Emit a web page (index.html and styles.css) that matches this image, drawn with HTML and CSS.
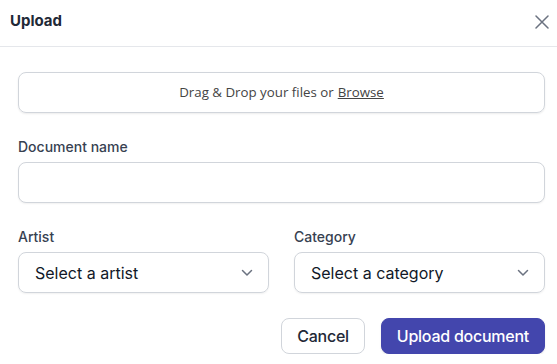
FILE: index.html
```html
<!DOCTYPE html>
<html>
<head>
    <link rel="stylesheet" href="styles.css">
</head>
<body>
    <div class="modal">
        <div class="modal-header">
            <span class="modal-title">Upload</span>
            <button class="close-btn" aria-label="Close">
                <svg width="14" height="14" viewBox="0 0 14 14" fill="none">
                    <path d="M1 1L13 13M13 1L1 13" stroke="#6b7280" stroke-width="1.5" stroke-linecap="round"/>
                </svg>
            </button>
        </div>

        <div class="modal-body">
            <div class="dropzone">
                Drag &amp; Drop your files or <span class="browse">Browse</span>
            </div>

            <div class="field">
                <label class="field-label">Document name</label>
                <input class="text-input" type="text">
            </div>

            <div class="field-row">
                <div class="field">
                    <label class="field-label">Artist</label>
                    <div class="select">
                        <span>Select a artist</span>
                        <svg width="12" height="8" viewBox="0 0 12 8" fill="none">
                            <path d="M1.5 1.5L6 6L10.5 1.5" stroke="#6b7280" stroke-width="1.5" stroke-linecap="round" stroke-linejoin="round"/>
                        </svg>
                    </div>
                </div>
                <div class="field">
                    <label class="field-label">Category</label>
                    <div class="select">
                        <span>Select a category</span>
                        <svg width="12" height="8" viewBox="0 0 12 8" fill="none">
                            <path d="M1.5 1.5L6 6L10.5 1.5" stroke="#6b7280" stroke-width="1.5" stroke-linecap="round" stroke-linejoin="round"/>
                        </svg>
                    </div>
                </div>
            </div>

            <div class="actions">
                <button class="btn btn-cancel">Cancel</button>
                <button class="btn btn-primary">Upload document</button>
            </div>
        </div>
    </div>
</body>
</html>
```

FILE: styles.css
```css
body {
    margin: 0;
    background-color: #ffffff;
    font-family: 'Inter', 'Liberation Sans', sans-serif;
    color: #111827;
}

.modal {
    width: 557px;
}

.modal-header {
    height: 47px;
    border-bottom: 1px solid #e5e7eb;
    box-sizing: border-box;
    display: flex;
    align-items: center;
    justify-content: space-between;
    padding: 0 8px 6px 10px;
}

.modal-title {
    font-size: 15px;
    font-weight: 700;
    color: #1f2937;
}

.close-btn {
    background: none;
    border: none;
    padding: 0;
    display: flex;
    margin-top: 4px;
}

.modal-body {
    padding: 25px 12px 0 18px;
}

.dropzone {
    height: 41px;
    box-sizing: border-box;
    border: 1px solid #d1d5db;
    border-radius: 8px;
    box-shadow: 0 1px 2px rgba(0, 0, 0, 0.08);
    display: flex;
    align-items: center;
    justify-content: center;
    font-family: 'Open Sans', sans-serif;
    font-size: 13.3px;
    color: #444;
    padding-bottom: 1px;
}

.browse {
    text-decoration: underline;
    margin-left: 4px;
}

.field {
    display: flex;
    flex-direction: column;
    margin-top: 24px;
    flex: 1;
}

.field-label {
    font-size: 14px;
    font-weight: 500;
    line-height: 20px;
    color: #374151;
    margin-bottom: 5px;
}

.text-input {
    height: 41px;
    box-sizing: border-box;
    border: 1px solid #d1d5db;
    border-radius: 8px;
    box-shadow: 0 1px 2px rgba(0, 0, 0, 0.06);
    margin: 0;
}

.field-row {
    display: flex;
    gap: 25px;
}

.select {
    height: 41px;
    box-sizing: border-box;
    border: 1px solid #d1d5db;
    border-radius: 8px;
    box-shadow: 0 1px 2px rgba(0, 0, 0, 0.06);
    display: flex;
    align-items: center;
    justify-content: space-between;
    padding: 0 15px 0 16px;
    font-size: 16px;
    color: #111827;
}

.actions {
    display: flex;
    justify-content: flex-end;
    gap: 16px;
    margin-top: 25px;
}

.btn {
    height: 36px;
    border-radius: 8px;
    font-family: 'Inter', sans-serif;
    font-size: 16px;
    font-weight: 500;
    letter-spacing: -0.25px;
    padding: 0 15px;
}

.btn-cancel {
    background: #ffffff;
    border: 1px solid #d1d5db;
    color: #1f2937;
}

.btn-primary {
    background: #4346ad;
    border: 1px solid #4346ad;
    color: #ffffff;
    box-shadow: 0 1px 2px rgba(0, 0, 0, 0.1);
}
```
